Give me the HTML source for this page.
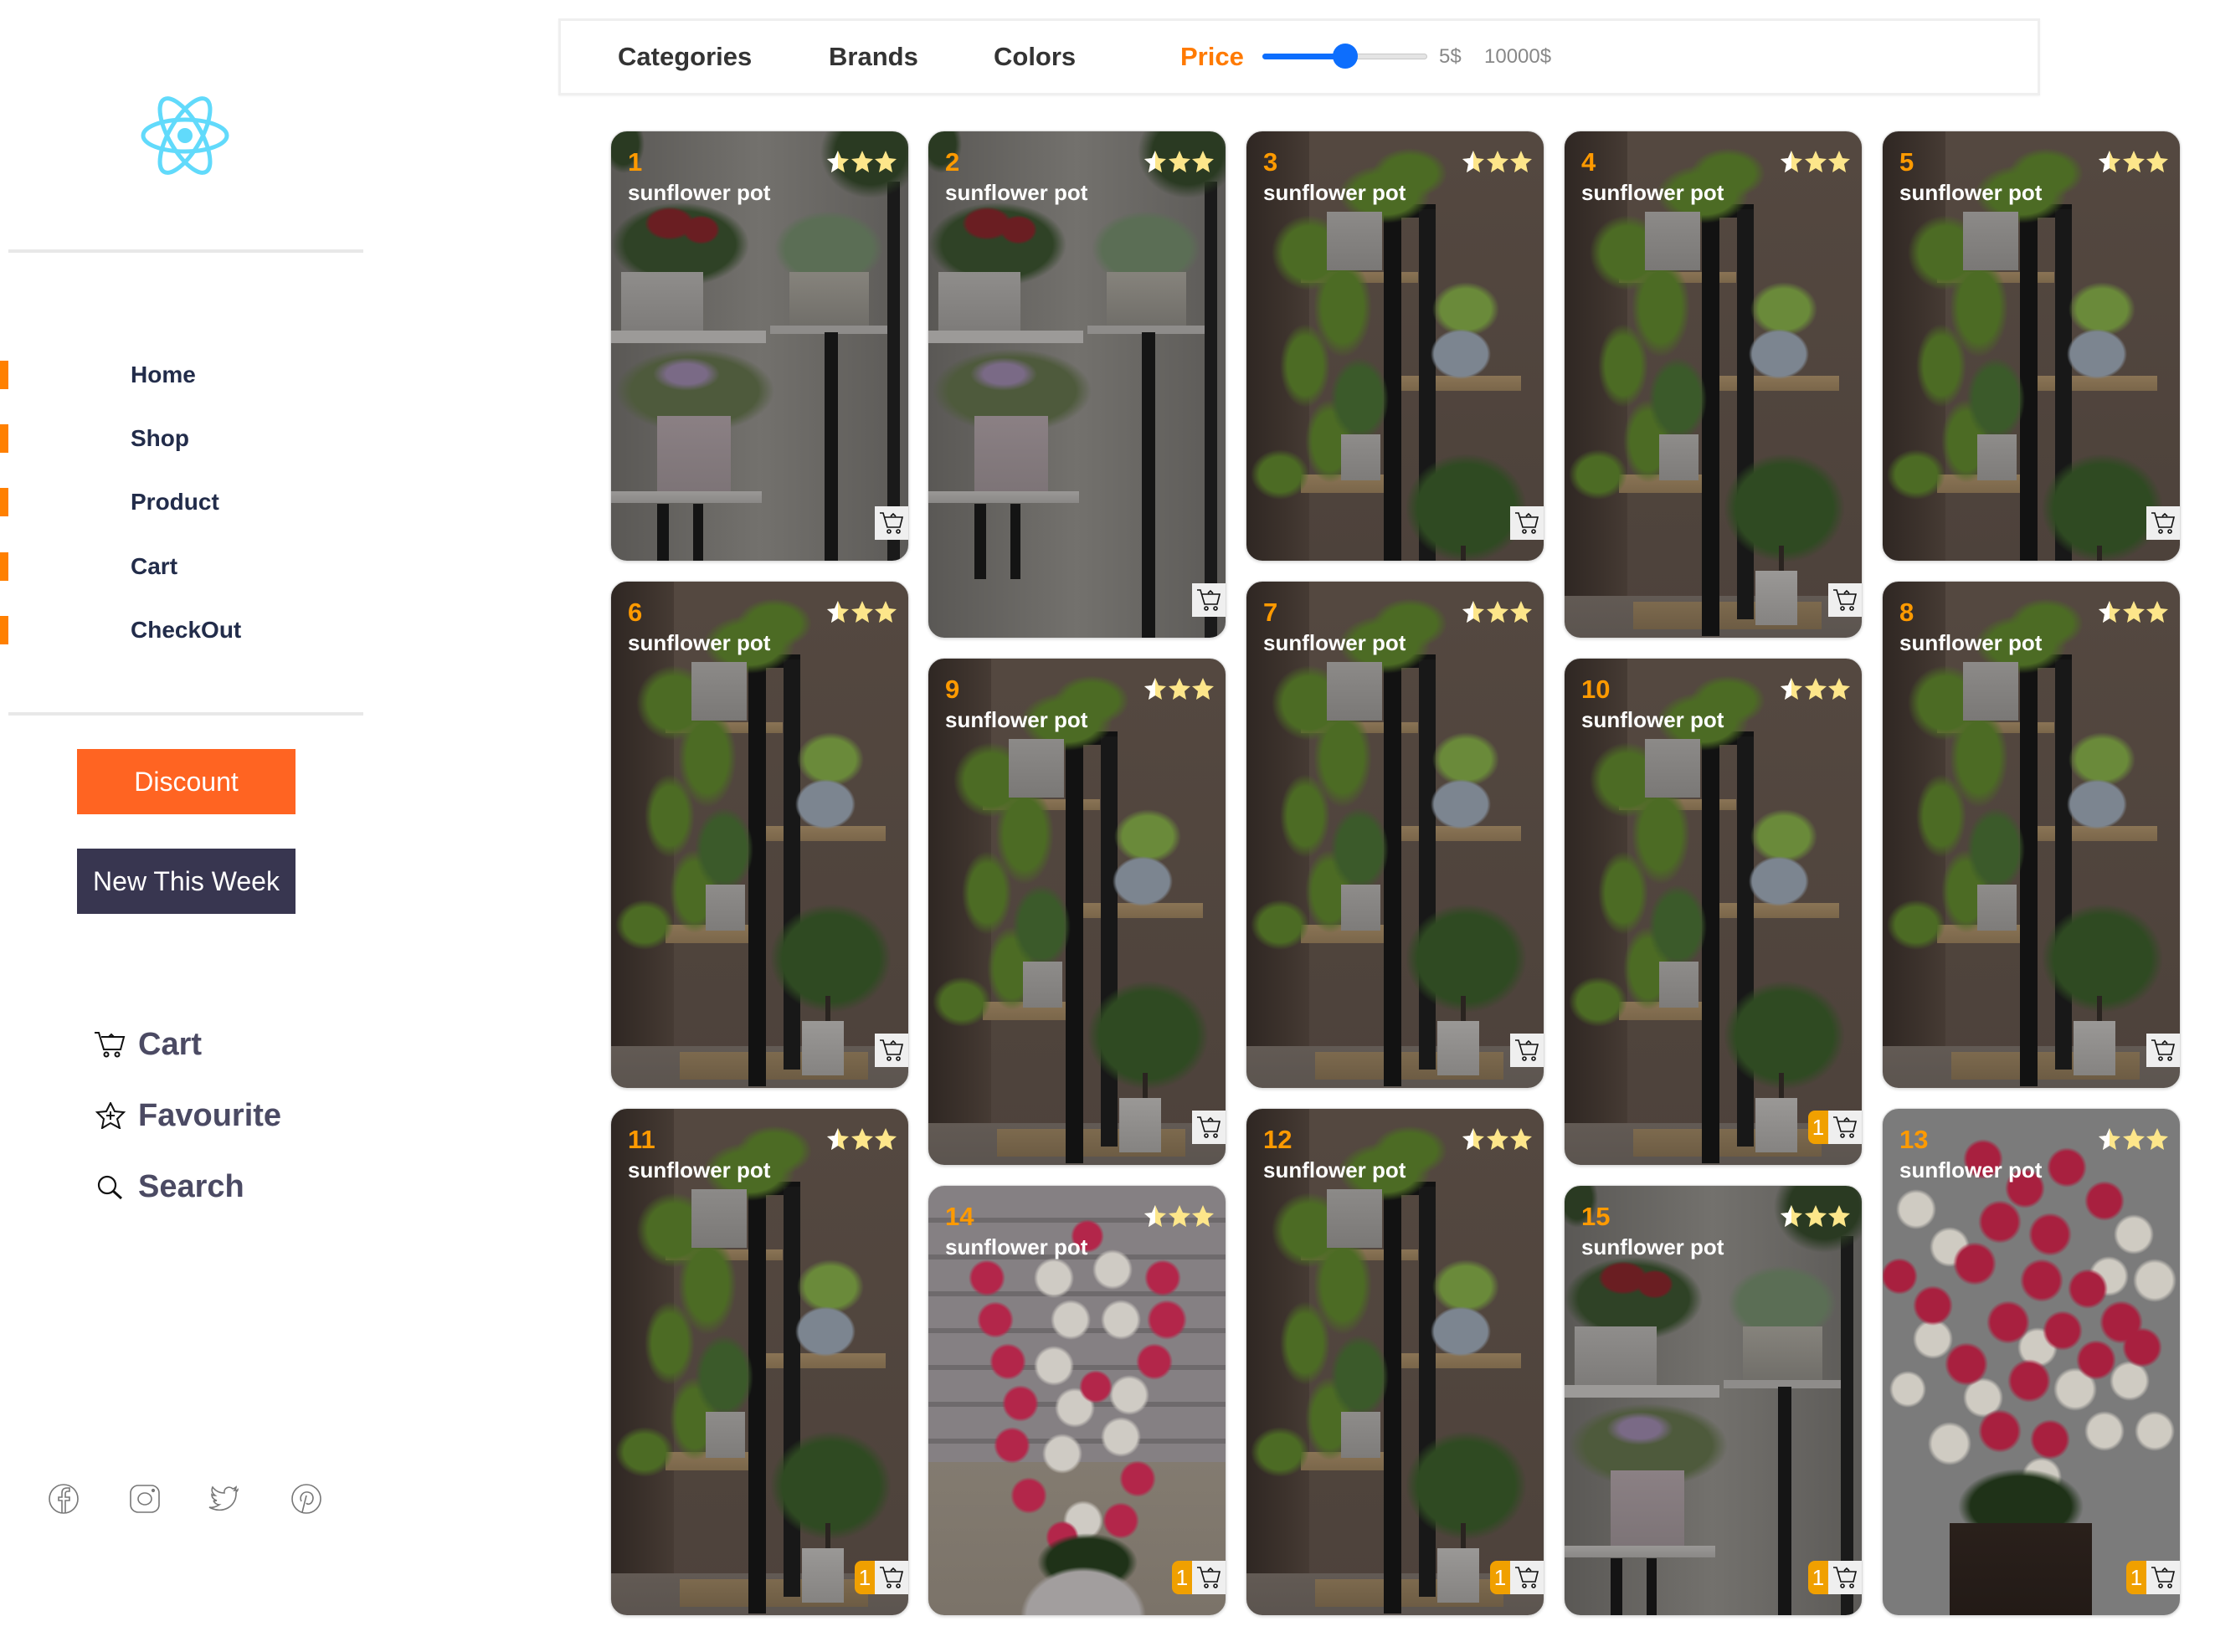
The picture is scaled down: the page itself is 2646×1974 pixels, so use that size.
<!DOCTYPE html>
<html><head><meta charset="utf-8">
<style>
*{margin:0;padding:0;box-sizing:border-box}
body{width:2646px;height:1974px;background:#fff;position:relative;overflow:hidden;font-family:"Liberation Sans",Arial,sans-serif}
.abs{position:absolute}
.hr{position:absolute;left:10px;width:424px;height:4px;background:#e8e8e8}
.nav{position:absolute;left:156px;font-size:28px;font-weight:bold;color:#222c4a;line-height:34px}
.mk{position:absolute;left:0;width:10px;height:34px;background:#ff8000}
.btn{position:absolute;left:92px;width:261px;height:78px;color:#fff;font-size:32px;text-align:center;line-height:78px}
.side{position:absolute;left:165px;font-size:38px;font-weight:bold;color:#4b4a63;line-height:44px}
.hd{position:absolute;top:48px;font-size:31px;font-weight:bold;color:#333;line-height:40px}
.card{position:absolute;width:357px;border-radius:20px;overflow:hidden;border:1px solid #ddd;box-shadow:0 1px 3px rgba(0,0,0,.15)}
.s{height:515px}.t{height:607px}
.num{position:absolute;left:20px;top:20px;font-size:31px;font-weight:bold;color:#ff9a00;line-height:34px}
.nm{position:absolute;left:20px;top:58px;font-size:26px;font-weight:bold;color:#fff;line-height:30px}
.st{position:absolute;right:14px;top:22px}
.cb{position:absolute;right:0;bottom:25px;width:40px;height:40px;background:#efefef}
.cb svg{position:absolute;left:5px;top:6px}
.bd{position:absolute;right:40px;bottom:25px;width:24px;height:40px;background:#f0a000;border-radius:8px 0 0 8px;color:#fff;font-size:26px;text-align:center;line-height:40px}
.A{background:
radial-gradient(closest-side,#2a3a22 70%,transparent) 250px -30px/120px 110px no-repeat,
radial-gradient(closest-side,#2a3a22 70%,transparent) -10px -20px/50px 70px no-repeat,
linear-gradient(#141414,#141414) 55px 445px/14px 90px no-repeat,
linear-gradient(#141414,#141414) 98px 445px/12px 90px no-repeat,
linear-gradient(#9a9896,#8a8886) 0 430px/180px 14px no-repeat,
radial-gradient(closest-side,#7a6a86 60%,transparent) 50px 270px/80px 40px no-repeat,
linear-gradient(#8b8084,#7d7477) 55px 340px/88px 90px no-repeat,
radial-gradient(closest-side,#4e5a3c 80%,transparent) 5px 260px/190px 100px no-repeat,
linear-gradient(#151515,#151515) 255px 240px/16px 420px no-repeat,
linear-gradient(#1a1a1a,#1a1a1a) 330px 60px/15px 600px no-repeat,
linear-gradient(#9c9a98,#9c9a98) 0 238px/185px 15px no-repeat,
linear-gradient(#8e8c8a,#8e8c8a) 190px 232px/140px 10px no-repeat,
linear-gradient(#86837c,#6f6d68) 213px 168px/95px 68px no-repeat,
radial-gradient(closest-side,#5b6e55 80%,transparent) 195px 95px/130px 90px no-repeat,
linear-gradient(#8f8d8b,#7d7b79) 12px 168px/98px 72px no-repeat,
radial-gradient(closest-side,#6a1e22 80%,transparent) 40px 90px/60px 40px no-repeat,
radial-gradient(closest-side,#6a1e22 80%,transparent) 85px 100px/45px 35px no-repeat,
radial-gradient(closest-side,#2f4226 80%,transparent) 0 85px/165px 100px no-repeat,
linear-gradient(90deg,#5a5855,#73716d 50%,#5c5a57)}
.B{background:
linear-gradient(#9a9896,#858381) 228px 525px/50px 65px no-repeat,
linear-gradient(#2a2420,#2a2420) 256px 495px/6px 32px no-repeat,
radial-gradient(closest-side,#2f4a22 80%,transparent) 190px 385px/145px 130px no-repeat,
radial-gradient(closest-side,#7c8590 88%,transparent) 220px 236px/72px 60px no-repeat,
radial-gradient(closest-side,#6a8a3a 75%,transparent) 222px 180px/80px 65px no-repeat,
linear-gradient(#8e8c8a,#7e7c7a) 113px 362px/47px 55px no-repeat,
radial-gradient(closest-side,#3b5a2a 75%,transparent) 100px 270px/70px 100px no-repeat,
linear-gradient(#8c8a88,#7a7876) 96px 96px/66px 70px no-repeat,
radial-gradient(closest-side,#4c6b24 70%,transparent) 30px 100px/90px 90px no-repeat,
radial-gradient(closest-side,#4c6b24 70%,transparent) 80px 150px/70px 120px no-repeat,
radial-gradient(closest-side,#4c6b24 70%,transparent) 40px 230px/60px 100px no-repeat,
radial-gradient(closest-side,#4c6b24 70%,transparent) 70px 320px/60px 100px no-repeat,
radial-gradient(closest-side,#4c6b24 70%,transparent) 5px 380px/70px 60px no-repeat,
radial-gradient(closest-side,#4c6b24 70%,transparent) 110px 40px/110px 70px no-repeat,
radial-gradient(closest-side,#4c6b24 70%,transparent) 150px 20px/90px 60px no-repeat,
linear-gradient(#121212,#121212) 164px 93px/21px 510px no-repeat,
linear-gradient(#181818,#181818) 206px 93px/20px 490px no-repeat,
linear-gradient(#121212,#121212) 164px 87px/62px 16px no-repeat,
linear-gradient(#8a7455,#7a664a) 65px 168px/140px 13px no-repeat,
linear-gradient(#8a7455,#7a664a) 178px 292px/150px 18px no-repeat,
linear-gradient(#8a7455,#7a664a) 65px 410px/105px 22px no-repeat,
linear-gradient(#7d6a4e,#6d5c44) 82px 562px/225px 33px no-repeat,
linear-gradient(#625a54,#5a534e) 0 555px/100% 60px no-repeat,
linear-gradient(90deg,#2f2723,#3c322c 60%,#463b34) 0 0/75px 100% no-repeat,
linear-gradient(#544840,#4d423b)}
.C{background:
linear-gradient(#2a201b,#221a16) 80px 495px/170px 115px no-repeat,
radial-gradient(closest-side,#1f3218 80%,transparent) 90px 430px/150px 90px no-repeat,
radial-gradient(circle 24px at 120px 60px,#a8203f 80%,transparent) ,radial-gradient(circle 24px at 170px 95px,#a8203f 80%,transparent),
radial-gradient(circle 24px at 220px 70px,#a8203f 80%,transparent),radial-gradient(circle 26px at 140px 135px,#a8203f 80%,transparent),
radial-gradient(circle 26px at 200px 150px,#a8203f 80%,transparent),radial-gradient(circle 24px at 265px 110px,#a8203f 80%,transparent),
radial-gradient(circle 26px at 110px 185px,#a8203f 80%,transparent),radial-gradient(circle 26px at 190px 205px,#a8203f 80%,transparent),
radial-gradient(circle 24px at 245px 215px,#a8203f 80%,transparent),radial-gradient(circle 24px at 60px 235px,#a8203f 80%,transparent),
radial-gradient(circle 26px at 150px 255px,#a8203f 80%,transparent),radial-gradient(circle 24px at 215px 265px,#a8203f 80%,transparent),
radial-gradient(circle 26px at 285px 255px,#a8203f 80%,transparent),radial-gradient(circle 26px at 100px 305px,#a8203f 80%,transparent),
radial-gradient(circle 26px at 175px 325px,#a8203f 80%,transparent),radial-gradient(circle 24px at 255px 300px,#a8203f 80%,transparent),
radial-gradient(circle 26px at 140px 385px,#a8203f 80%,transparent),radial-gradient(circle 24px at 200px 395px,#a8203f 80%,transparent),
radial-gradient(circle 24px at 310px 285px,#a8203f 80%,transparent),radial-gradient(circle 22px at 20px 200px,#a8203f 80%,transparent),
radial-gradient(circle 24px at 40px 120px,#cfcbc2 80%,transparent),radial-gradient(circle 24px at 80px 165px,#cfcbc2 80%,transparent),
radial-gradient(circle 24px at 300px 150px,#cfcbc2 80%,transparent),radial-gradient(circle 26px at 325px 205px,#cfcbc2 80%,transparent),
radial-gradient(circle 24px at 270px 200px,#cfcbc2 80%,transparent),radial-gradient(circle 24px at 60px 275px,#cfcbc2 80%,transparent),
radial-gradient(circle 26px at 230px 335px,#cfcbc2 80%,transparent),radial-gradient(circle 24px at 295px 325px,#cfcbc2 80%,transparent),
radial-gradient(circle 24px at 120px 345px,#cfcbc2 80%,transparent),radial-gradient(circle 26px at 80px 400px,#cfcbc2 80%,transparent),
radial-gradient(circle 24px at 190px 440px,#cfcbc2 80%,transparent),radial-gradient(circle 24px at 325px 385px,#cfcbc2 80%,transparent),
radial-gradient(circle 24px at 265px 385px,#cfcbc2 80%,transparent),radial-gradient(circle 22px at 30px 335px,#cfcbc2 80%,transparent),
radial-gradient(circle 24px at 185px 285px,#cfcbc2 80%,transparent),
#7b7b7b}
.D{background:
radial-gradient(closest-side,#a29e9e 90%,transparent) 110px 455px/150px 120px no-repeat,
radial-gradient(closest-side,#1f3218 80%,transparent) 130px 415px/120px 70px no-repeat,
radial-gradient(circle 22px at 70px 110px,#b3264a 80%,transparent),radial-gradient(circle 22px at 80px 160px,#b3264a 80%,transparent),
radial-gradient(circle 22px at 95px 210px,#b3264a 80%,transparent),radial-gradient(circle 22px at 110px 260px,#b3264a 80%,transparent),
radial-gradient(circle 22px at 100px 310px,#b3264a 80%,transparent),radial-gradient(circle 22px at 120px 370px,#b3264a 80%,transparent),
radial-gradient(circle 22px at 280px 110px,#b3264a 80%,transparent),radial-gradient(circle 24px at 285px 160px,#b3264a 80%,transparent),
radial-gradient(circle 22px at 270px 210px,#b3264a 80%,transparent),radial-gradient(circle 22px at 250px 350px,#b3264a 80%,transparent),
radial-gradient(circle 22px at 230px 400px,#b3264a 80%,transparent),radial-gradient(circle 20px at 200px 240px,#b3264a 80%,transparent),
radial-gradient(circle 20px at 190px 60px,#b3264a 80%,transparent),radial-gradient(circle 20px at 160px 420px,#b3264a 80%,transparent),
radial-gradient(circle 24px at 150px 110px,#cfcbc4 80%,transparent),radial-gradient(circle 24px at 220px 100px,#cfcbc4 80%,transparent),
radial-gradient(circle 24px at 170px 160px,#cfcbc4 80%,transparent),radial-gradient(circle 24px at 230px 160px,#cfcbc4 80%,transparent),
radial-gradient(circle 24px at 150px 215px,#cfcbc4 80%,transparent),radial-gradient(circle 24px at 240px 250px,#cfcbc4 80%,transparent),
radial-gradient(circle 24px at 175px 265px,#cfcbc4 80%,transparent),radial-gradient(circle 24px at 160px 320px,#cfcbc4 80%,transparent),
radial-gradient(circle 24px at 230px 300px,#cfcbc4 80%,transparent),radial-gradient(circle 24px at 185px 400px,#cfcbc4 80%,transparent),
linear-gradient(#837b70,#7a7268) 0 330px/100% 200px no-repeat,
repeating-linear-gradient(#858083 0 38px,#6e6a6c 38px 44px)}
.sc{position:absolute;width:38px;height:38px}
</style></head><body>

<svg class="abs" style="left:166px;top:112px" width="110" height="100" viewBox="-55 -50 110 100" fill="none" stroke="#61dafb" stroke-width="5">
<ellipse rx="50" ry="19"/><ellipse rx="50" ry="19" transform="rotate(60)"/><ellipse rx="50" ry="19" transform="rotate(120)"/>
<circle r="9" fill="#61dafb" stroke="none"/></svg>

<div class="hr" style="top:298px"></div>
<div class="mk" style="top:431px"></div><div class="nav" style="top:431px">Home</div>
<div class="mk" style="top:507px"></div><div class="nav" style="top:507px">Shop</div>
<div class="mk" style="top:583px"></div><div class="nav" style="top:583px">Product</div>
<div class="mk" style="top:660px"></div><div class="nav" style="top:660px">Cart</div>
<div class="mk" style="top:736px"></div><div class="nav" style="top:736px">CheckOut</div>
<div class="hr" style="top:851px"></div>
<div class="btn" style="top:895px;background:#ff6422">Discount</div>
<div class="btn" style="top:1014px;background:#383650">New This Week</div>

<svg class="abs" style="left:112px;top:1232px" width="40" height="32" viewBox="0 0 40 32" fill="none" stroke="#111" stroke-width="2"><path d="M1 2h5l6 20h20l4-15H9"/><circle cx="15" cy="28" r="2.5"/><circle cx="28" cy="28" r="2.5"/><path d="M18 7l3-3 3 3"/></svg>
<div class="side" style="top:1226px">Cart</div>
<svg class="abs" style="left:111px;top:1317px" width="42" height="32" viewBox="0 0 42 32" fill="none" stroke="#111" stroke-width="2"><path d="M21 1l5 10 11 1-8 8 3 11-11-6-10 6 2-11-8-8 11-1z"/><path d="M21 11v10M16 16h10"/></svg>
<div class="side" style="top:1311px">Favourite</div>
<svg class="abs" style="left:112px;top:1404px" width="40" height="30" viewBox="0 0 40 30" fill="none" stroke="#111" stroke-width="2.2"><circle cx="16" cy="12" r="10"/><path d="M23 19l10 9" stroke-width="3"/></svg>
<div class="side" style="top:1396px">Search</div>

<svg class="sc" style="left:57px;top:1772px" viewBox="0 0 38 38" fill="none" stroke="#777" stroke-width="1.6"><circle cx="19" cy="19" r="17"/><path d="M21 36V21h5v-4h-5v-4c0-2 1-3 3-3h2V6h-3c-4 0-6 2-6 6v5h-4v4h4v15"/></svg>
<svg class="sc" style="left:154px;top:1772px" viewBox="0 0 38 38" fill="none" stroke="#777" stroke-width="1.6"><rect x="2" y="3" width="34" height="32" rx="9"/><ellipse cx="19" cy="19" rx="8" ry="7"/><circle cx="29" cy="9" r="1.3" fill="#777"/></svg>
<svg class="sc" style="left:249px;top:1772px" viewBox="0 0 38 38" fill="none" stroke="#777" stroke-width="1.6"><path d="M35 8c-1 1-3 1-4 1 1-1 2-2 2-4-1 1-3 2-4 2-4-4-11-1-10 5-6 0-11-3-14-7-2 4 0 8 3 10-1 0-3 0-4-1 0 4 3 6 6 7-1 0-3 1-4 0 1 3 4 5 7 5-3 2-7 4-12 3 16 9 33-1 32-18 1-1 2-2 2-3z"/></svg>
<svg class="sc" style="left:347px;top:1772px" viewBox="0 0 38 38" fill="none" stroke="#777" stroke-width="1.6"><circle cx="19" cy="19" r="17"/><path d="M14 35l5-20M13 22c-3-6 2-12 8-11 6 1 7 7 5 11-2 4-6 4-7 2"/></svg>

<div class="abs" style="left:667px;top:22px;width:1770px;height:92px;border:3px solid #efefef;box-shadow:0 1px 2px rgba(0,0,0,.05)"></div>
<div class="hd" style="left:738px">Categories</div>
<div class="hd" style="left:990px">Brands</div>
<div class="hd" style="left:1187px">Colors</div>
<div class="hd" style="left:1410px;color:#ff7a00">Price</div>
<div class="abs" style="left:1508px;top:64px;width:197px;height:7px;border-radius:4px;background:#e4e4e4;border:1px solid #c8c8c8"></div>
<div class="abs" style="left:1508px;top:64px;width:100px;height:7px;border-radius:4px;background:#0d6efd"></div>
<div class="abs" style="left:1592px;top:52px;width:30px;height:30px;border-radius:50%;background:#0d6efd"></div>
<div class="abs" style="left:1719px;top:53px;font-size:24px;color:#888;line-height:30px">5$</div>
<div class="abs" style="left:1773px;top:53px;font-size:24px;color:#888;line-height:30px">10000$</div>

<svg width="0" height="0" style="position:absolute"><defs>
<symbol id="stars" viewBox="0 0 84 28"><g fill="#fde68a"><path id="s1" d="M14 1l4 9 9 1-7 6 2 10-8-5-8 5 2-10-7-6 9-1z"/><use href="#s1" x="29"/><use href="#s1" x="57"/></g><path d="M14 1l-4 9-9 1 7 6-2 10 8-5z" fill="#fff"/></symbol>
<symbol id="cart" viewBox="0 0 30 28"><g fill="none" stroke="#111" stroke-width="1.6"><path d="M1 2h4l5 17h15l3-12H7"/><circle cx="12" cy="24" r="2"/><circle cx="23" cy="24" r="2"/><path d="M14 6l3-3 3 3"/></g></symbol>
</defs></svg>

<div class="card s A" style="left:729px;top:156px"><div class="num">1</div><div class="nm">sunflower pot</div><svg class="st" width="84" height="28"><use href="#stars"/></svg><div class="cb"><svg width="30" height="28"><use href="#cart"/></svg></div></div>
<div class="card t B" style="left:729px;top:694px"><div class="num">6</div><div class="nm">sunflower pot</div><svg class="st" width="84" height="28"><use href="#stars"/></svg><div class="cb"><svg width="30" height="28"><use href="#cart"/></svg></div></div>
<div class="card t B" style="left:729px;top:1324px"><div class="num">11</div><div class="nm">sunflower pot</div><svg class="st" width="84" height="28"><use href="#stars"/></svg><div class="bd">1</div><div class="cb"><svg width="30" height="28"><use href="#cart"/></svg></div></div>

<div class="card t A" style="left:1108px;top:156px"><div class="num">2</div><div class="nm">sunflower pot</div><svg class="st" width="84" height="28"><use href="#stars"/></svg><div class="cb"><svg width="30" height="28"><use href="#cart"/></svg></div></div>
<div class="card t B" style="left:1108px;top:786px"><div class="num">9</div><div class="nm">sunflower pot</div><svg class="st" width="84" height="28"><use href="#stars"/></svg><div class="cb"><svg width="30" height="28"><use href="#cart"/></svg></div></div>
<div class="card s D" style="left:1108px;top:1416px"><div class="num">14</div><div class="nm">sunflower pot</div><svg class="st" width="84" height="28"><use href="#stars"/></svg><div class="bd">1</div><div class="cb"><svg width="30" height="28"><use href="#cart"/></svg></div></div>

<div class="card s B" style="left:1488px;top:156px"><div class="num">3</div><div class="nm">sunflower pot</div><svg class="st" width="84" height="28"><use href="#stars"/></svg><div class="cb"><svg width="30" height="28"><use href="#cart"/></svg></div></div>
<div class="card t B" style="left:1488px;top:694px"><div class="num">7</div><div class="nm">sunflower pot</div><svg class="st" width="84" height="28"><use href="#stars"/></svg><div class="cb"><svg width="30" height="28"><use href="#cart"/></svg></div></div>
<div class="card t B" style="left:1488px;top:1324px"><div class="num">12</div><div class="nm">sunflower pot</div><svg class="st" width="84" height="28"><use href="#stars"/></svg><div class="bd">1</div><div class="cb"><svg width="30" height="28"><use href="#cart"/></svg></div></div>

<div class="card t B" style="left:1868px;top:156px"><div class="num">4</div><div class="nm">sunflower pot</div><svg class="st" width="84" height="28"><use href="#stars"/></svg><div class="cb"><svg width="30" height="28"><use href="#cart"/></svg></div></div>
<div class="card t B" style="left:1868px;top:786px"><div class="num">10</div><div class="nm">sunflower pot</div><svg class="st" width="84" height="28"><use href="#stars"/></svg><div class="bd">1</div><div class="cb"><svg width="30" height="28"><use href="#cart"/></svg></div></div>
<div class="card s A" style="left:1868px;top:1416px"><div class="num">15</div><div class="nm">sunflower pot</div><svg class="st" width="84" height="28"><use href="#stars"/></svg><div class="bd">1</div><div class="cb"><svg width="30" height="28"><use href="#cart"/></svg></div></div>

<div class="card s B" style="left:2248px;top:156px"><div class="num">5</div><div class="nm">sunflower pot</div><svg class="st" width="84" height="28"><use href="#stars"/></svg><div class="cb"><svg width="30" height="28"><use href="#cart"/></svg></div></div>
<div class="card t B" style="left:2248px;top:694px"><div class="num">8</div><div class="nm">sunflower pot</div><svg class="st" width="84" height="28"><use href="#stars"/></svg><div class="cb"><svg width="30" height="28"><use href="#cart"/></svg></div></div>
<div class="card t C" style="left:2248px;top:1324px"><div class="num">13</div><div class="nm">sunflower pot</div><svg class="st" width="84" height="28"><use href="#stars"/></svg><div class="bd">1</div><div class="cb"><svg width="30" height="28"><use href="#cart"/></svg></div></div>

</body></html>
